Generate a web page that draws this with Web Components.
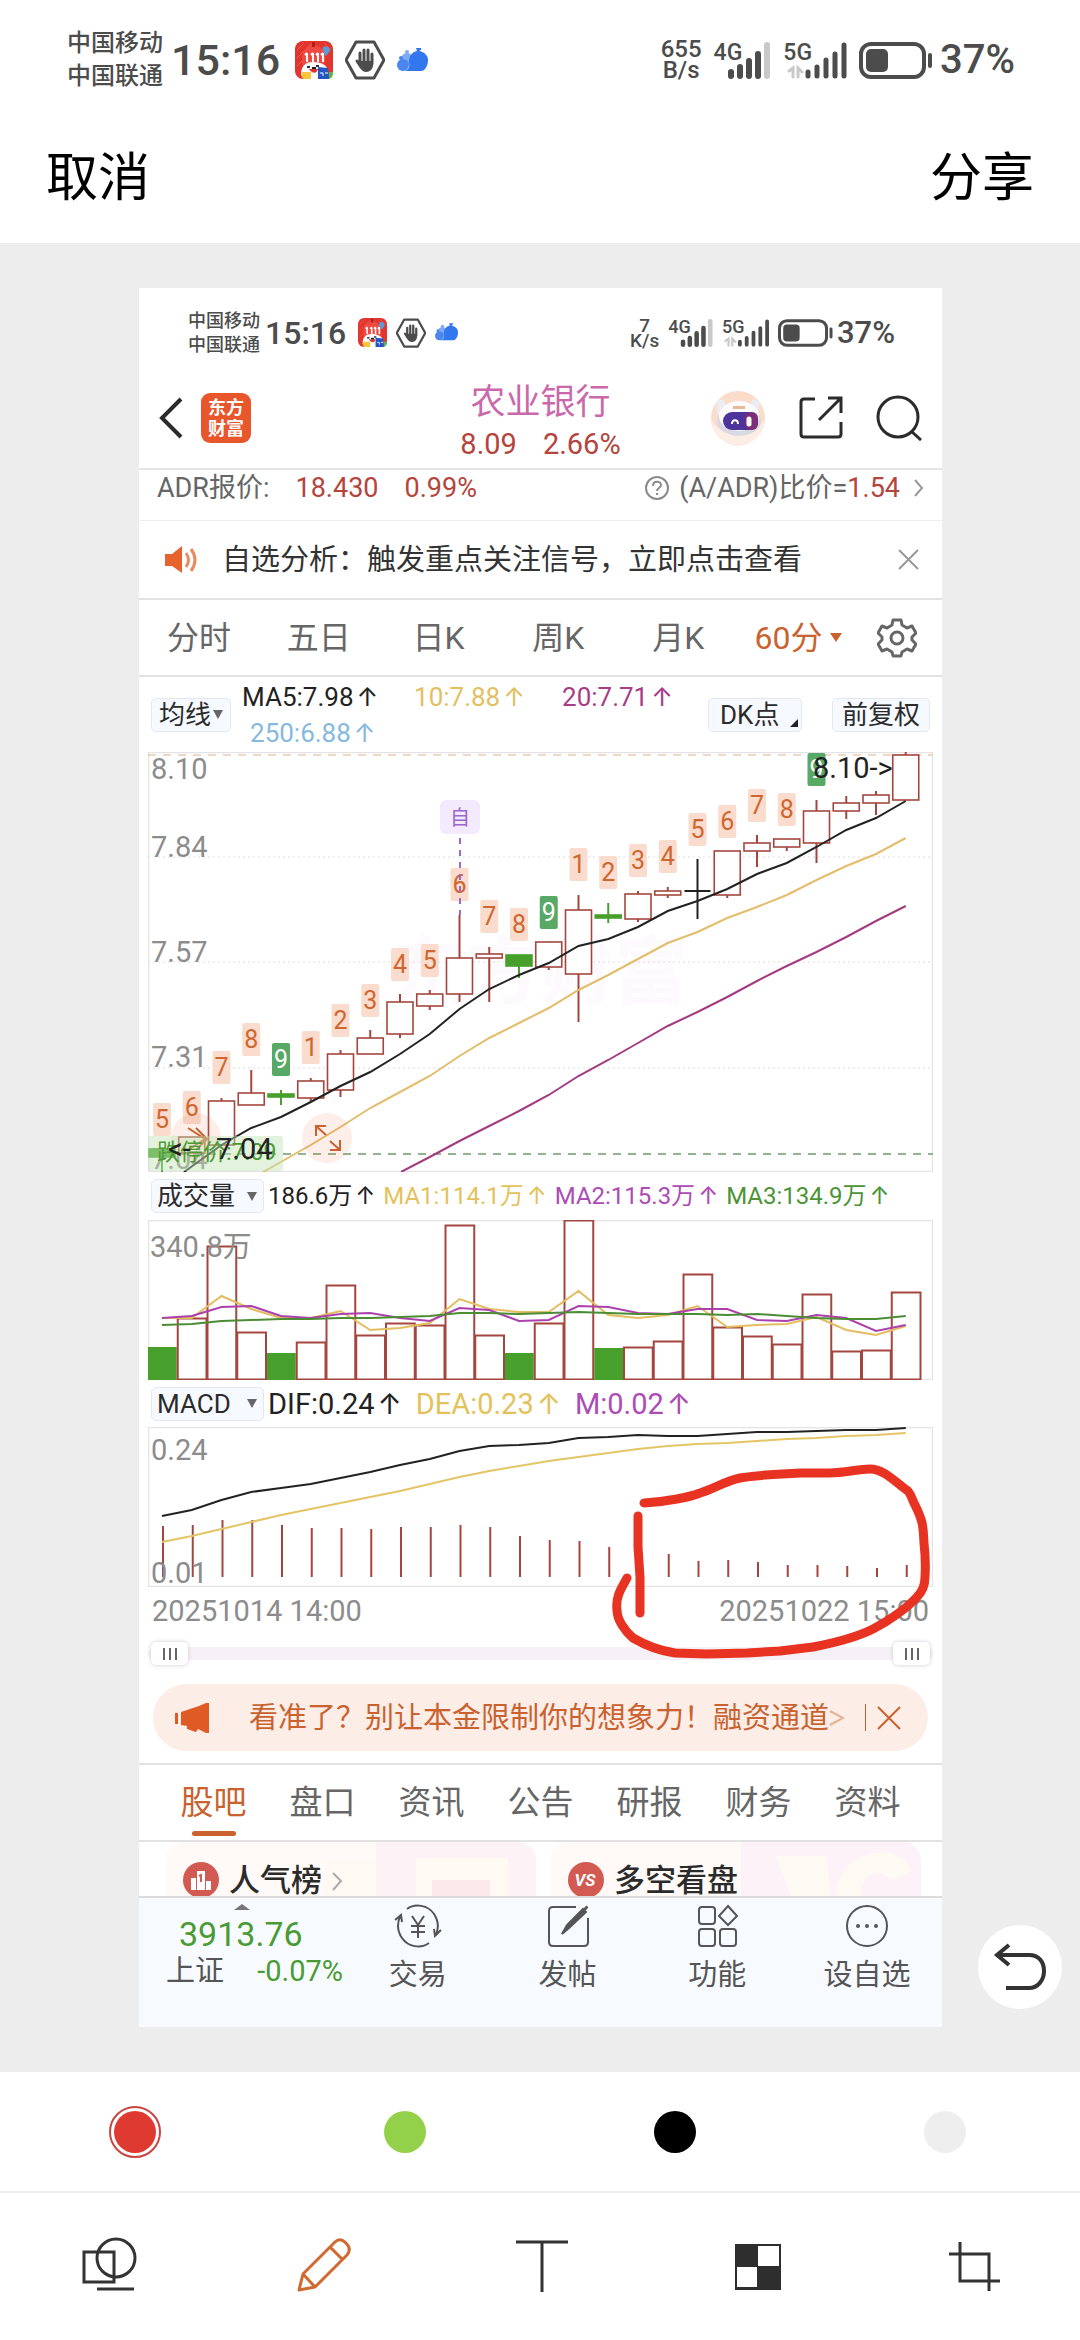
<!DOCTYPE html>
<html lang="zh-CN">
<head>
<meta charset="utf-8">
<meta name="viewport" content="width=device-width, initial-scale=1">
<title>编辑图片</title>
<style>
  body {
    margin: 0;
    background: #fff;
    color: #333;
    font-family: Roboto, "Noto Sans CJK SC", sans-serif;
  }
</style>
</head>
<body>
<photo-editor>
  <status-line slot="status" speed="655" unit="B/s"></status-line>
  <stock-page>
    <status-line slot="status" small speed="7" unit="K/s"></status-line>
  </stock-page>
</photo-editor>

<script>
(function () {
  const RESET = `
    :host, *, *::before, *::after { box-sizing: border-box; }
    button {
      margin: 0; padding: 0; border: 0;
      background: none; color: inherit; font: inherit; cursor: pointer;
    }
    a { color: inherit; text-decoration: none; }
    svg { display: block; flex: none; }
  `;

  // Registers an element whose shadow root is a clone of the given markup.
  function define(name, html, setup) {
    const template = document.createElement("template");
    template.innerHTML = html;

    customElements.define(name, class extends HTMLElement {
      constructor() {
        super();
        this.attachShadow({ mode: "open" });
        this.shadowRoot.appendChild(template.content.cloneNode(true));
      }

      connectedCallback() {
        if (setup) setup(this, this.shadowRoot);
      }
    });
  }

  // ---------- phone status line ----------

  define("status-line", `
    <style>
      ${RESET}
      :host {
        display: flex; justify-content: space-between; align-items: center;
        height: 120px; padding: 0 65px 0 67px; color: #4c4c4c;
        --carrier: 24px; --row: 33px; --clock: 43px; --net: 24px; --net-row: 21px; --pct: 40px;
        --icon: 38px; --hex: 40px; --cloud: 31px; --gen: 23px; --bars: 37px; --bat: 75px;
        --gap: 12px; --lap: -15px;
      }
      :host([small]) {
        height: 89px; padding: 0 47px 0 49px;
        --carrier: 18px; --row: 24px; --clock: 32px; --net: 19px; --net-row: 15px; --pct: 31px;
        --icon: 29px; --hex: 30px; --cloud: 23px; --gen: 18px; --bars: 28px; --bat: 56px;
        --gap: 9px; --lap: -11px;
      }
      .side { display: flex; align-items: center; gap: var(--gap); }
      .carriers { font-size: var(--carrier); line-height: var(--row); font-weight: 500; }
      .carriers div, .net div { white-space: nowrap; }
      .clock { font-size: var(--clock); line-height: 1; font-weight: 500; margin: 0 3px 0 -4px; }
      .net { font-size: var(--net); line-height: var(--net-row); font-weight: 500; text-align: center; }
      .signal { display: flex; align-items: flex-start; height: var(--bars); }
      .signal span { font-size: var(--gen); line-height: 1; font-weight: 500; margin-right: var(--lap); margin-top: -1px; }
      .signal svg { height: var(--bars); width: auto; }
      .battery { height: var(--bars); width: var(--bat); }
      .pct { font-size: var(--pct); line-height: 1; font-weight: 500; margin-left: -6px; }
    </style>
    <div class="side">
      <div class="carriers"><div>中国移动</div><div>中国联通</div></div>
      <div class="clock">15:16</div>
      <svg style="width:var(--icon);height:var(--icon)" viewBox="0 0 38 38">
        <rect width="38" height="38" rx="8" fill="#e2352d"/>
        <path d="M2 9 9 2M2 17 17 2M2 25 9 18M29 2l7 7" stroke="#ee5a4c" stroke-width="1"/>
        <path d="M28 6c4-2 7 1 7 4l-4 5-4-3z" fill="#5a9bd8"/>
        <path d="M7 24C6 10 11 4 18 4s14 6 12 20z" fill="#ef4a41"/>
        <path d="M17 1h3v5h-3z" fill="#a8231d"/>
        <path d="M12 12v9M18 12v9M23 12v9M28 12v9M10 14l2-2M16 14l2-2M21 14l2-2M26 14l2-2" stroke="#fff" stroke-width="2" fill="none"/>
        <path d="M6 34c0-9 4-13 12-13s14 3 15 9v8H10z" fill="#fff"/>
        <path d="M12 25h3v2h-3zM21 24h3v2h-3z" fill="#333"/>
        <path d="M14 28h9c-1 5-6 5-9 0z" fill="#d93a30"/>
        <path d="M17 26h4v2h-4z" fill="#222"/>
        <path d="M7 31h9v7H9c-2 0-3-3-2-7z" fill="#f9c53a"/>
        <path d="M23 26l10 1 1 11H23z" fill="#2456c4"/>
        <path d="M25 32h3v3m2-3h3" stroke="#fff" fill="none"/>
        <path d="M34 31h4c0 4-1 6-4 7z" fill="#59b35b"/>
      </svg>
      <svg style="width:var(--hex);height:var(--hex)" viewBox="0 0 40 40" fill="none" stroke="#4c4c4c">
        <path d="M11 2h18l10 18-10 18H11L1 20z" stroke-width="3" stroke-linejoin="round"/>
        <path d="M15 13v10M19 10v12M23 10v12M27 14v10M12 21l4 6" stroke-width="3" stroke-linecap="round"/>
        <path d="M14 21h14v4c0 4-3 7-7 7s-6-4-8-8z" fill="#4c4c4c" stroke="none"/>
      </svg>
      <svg style="width:var(--cloud);height:var(--cloud)" viewBox="0 0 31 31">
        <circle cx="10" cy="14" r="6" fill="#7eaaf3"/><circle cx="10" cy="7" r="2" fill="#7eaaf3"/>
        <circle cx="6" cy="20" r="6" fill="#4a86ee"/><circle cx="4" cy="13" r="2" fill="#4a86ee"/>
        <path d="M19 3h5v2l-2 1c6 1 9 5 9 9 0 6-3 11-7 11H6c6 0 7-5 6-9 0-6 3-10 8-11z" fill="#3377f0"/>
      </svg>
    </div>
    <div class="side">
      <div class="net"><div id="speed"></div><div id="unit"></div></div>
      <div class="signal">
        <span>4G</span>
        <svg viewBox="0 0 44 37" stroke="#4c4c4c" stroke-width="6" stroke-linecap="round">
          <path d="M4 30v4M13 25v9M22 19v15M31 12v22"/><path d="M40 3v31" stroke="#c9c9c9"/>
        </svg>
      </div>
      <div class="signal">
        <span>5G</span>
        <svg viewBox="-10 0 60 37" stroke="#4c4c4c" stroke-width="5" stroke-linecap="round" style="margin-left:-10px">
          <path d="M11 30v4M20 25v9M29 18v16M38 12v22M47 3v31"/>
          <path d="M-8 29l4-3v9M1 35v-9l4 4" stroke="#c9c9c9" stroke-width="3" fill="none"/>
        </svg>
      </div>
      <svg class="battery" viewBox="0 0 75 37">
        <rect x="2" y="2" width="63" height="33" rx="10" fill="none" stroke="#4c4c4c" stroke-width="4"/>
        <rect x="7" y="7" width="22" height="23" rx="5" fill="#4c4c4c"/>
        <path d="M71 13v11" stroke="#4c4c4c" stroke-width="4" stroke-linecap="round"/>
      </svg>
      <div class="pct">37%</div>
    </div>
  `, (host, root) => {
    root.getElementById("speed").textContent = host.getAttribute("speed");
    root.getElementById("unit").textContent = host.getAttribute("unit");
  });

  // ---------- stock app: header ----------

  define("stock-header", `
    <style>
      ${RESET}
      :host { display: block; color: #666; }
      .nav {
        display: grid; grid-template-columns: 1fr auto 1fr; align-items: center;
        height: 93px; padding: 0 20px; border-bottom: 2px solid #e6e6e6;
      }
      .left, .right { display: flex; align-items: center; }
      .left { gap: 18px; margin-top: -10px; }
      .right { gap: 33px; justify-content: flex-end; margin-top: -10px; }
      .logo {
        width: 50px; height: 50px; border-radius: 9px; background: #e8562b; color: #fff;
        font-size: 18px; line-height: 21px; padding-top: 4px; font-weight: 700; text-align: center;
      }
      .name { text-align: center; }
      h1 { margin: 0; font-size: 35px; line-height: 42px; font-weight: 400; color: #cb68ab; }
      .quote { display: flex; gap: 26px; font-size: 29px; line-height: 40px; color: #b5443c; }
      .adr {
        display: flex; align-items: center; height: 51px; padding: 0 18px 14px;
        border-bottom: 1px solid #eee; font-size: 27px; line-height: 36px; white-space: nowrap;
      }
      .adr b { font-weight: 400; color: #b5443c; margin-left: 26px; }
      .adr a { display: flex; align-items: center; margin-left: auto; }
      .adr a b { margin: 0; }
      .adr a svg:first-child { margin-right: 9px; }
      .adr a svg:last-child { margin-left: 14px; }
    </style>
    <div class="nav">
      <div class="left">
        <button aria-label="返回"><svg width="24" height="42" viewBox="0 0 24 42" fill="none" stroke="#2b2b2b" stroke-width="4"><path d="M22 2 3 21l19 19"/></svg></button>
        <div class="logo">东方<br>财富</div>
      </div>
      <div class="name">
        <h1>农业银行</h1>
        <div class="quote"><span>8.09</span><span>2.66%</span></div>
      </div>
      <div class="right">
        <button aria-label="智能助手">
          <svg width="55" height="56" viewBox="0 0 55 56">
            <circle cx="27" cy="28" r="27" fill="#fbdccb"/>
            <path d="M0 29c6 36 48 36 54 0-10 20-44 20-54 0z" fill="#fdeee5"/>
            <path d="M5 13q2-5 8-3l3 12-9 4zM49 13q-2-5-8-3l-3 12 9 4z" fill="#ececf2"/>
            <ellipse cx="28" cy="31" rx="22" ry="15" fill="#d9d9e4"/>
            <ellipse cx="28" cy="26" rx="20" ry="15" fill="#fbfbfd"/>
            <path d="M22 16h12v3H22z" fill="#e9b996"/>
            <rect x="12" y="22" width="35" height="18" rx="9" fill="#4d349c"/>
            <rect x="34" y="22" width="13" height="18" rx="6" fill="#7c2f78"/>
            <path d="M21 34c0-5 6-5 6 0" fill="none" stroke="#fff" stroke-width="2"/>
            <path d="M38 29v5" stroke="#fff" stroke-width="5" stroke-linecap="round"/>
          </svg>
        </button>
        <button aria-label="分享"><svg width="44" height="44" viewBox="0 0 44 44" fill="none" stroke="#2b2b2b" stroke-width="3"><path d="M16 3H5Q2 3 2 6v32q0 3 3 3h34q3 0 3-3V26M20 24 42 2M29 2h13v15"/></svg></button>
        <button aria-label="搜索"><svg width="46" height="46" viewBox="0 0 46 46" fill="none" stroke="#2b2b2b" stroke-width="3"><circle cx="22" cy="22" r="20"/><path d="m35 36 10 9"/></svg></button>
      </div>
    </div>
    <div class="adr">
      <span>ADR报价:</span><b>18.430</b><b>0.99%</b>
      <a href="#adr">
        <svg width="26" height="26" viewBox="0 0 26 26" fill="none" stroke="#8a8a8a" stroke-width="2"><circle cx="13" cy="13" r="11"/><path d="M9 11c0-6 8-5 8-1 0 3-4 3-4 6"/><path d="M13 18v2"/></svg>
        (A/ADR)比价=<b>1.54</b>
        <svg width="10" height="18" viewBox="0 0 10 18" fill="none" stroke="#999" stroke-width="2"><path d="m1 1 7 8-7 8"/></svg>
      </a>
    </div>
  `);

  define("notice-bar", `
    <style>
      ${RESET}
      :host {
        display: flex; align-items: center; height: 79px; padding: 0 23px 0 26px;
        border-bottom: 2px solid #e2e2e2; font-size: 29px; line-height: 40px; white-space: nowrap;
      }
      p { margin: 0 auto 0 24px; }
    </style>
    <svg width="33" height="28" viewBox="0 0 33 28" fill="#e8622e">
      <path d="M0 8h7L17 0v27L7 20H0z"/>
      <path d="M21 7q5 7 0 14M26 3q8 11 0 22" fill="none" stroke="#e98a5f" stroke-width="3"/>
    </svg>
    <p><slot></slot></p>
    <button aria-label="关闭"><svg width="21" height="21" viewBox="0 0 21 21" stroke="#999" stroke-width="2"><path d="m1 1 19 19M20 1 1 20"/></svg></button>
  `);

  define("period-tabs", `
    <style>
      ${RESET}
      :host {
        display: grid; grid-template-columns: repeat(6, 1fr) 78px; align-items: center;
        height: 77px; padding-right: 6px; border-bottom: 2px solid #e2e2e2;
        font-size: 32px; line-height: 44px; color: #666;
      }
      button { display: flex; justify-content: center; align-items: center; gap: 7px; }
      .on { color: #c9622f; }
      .on::after { content: ""; border: 6px solid transparent; border-top: 9px solid #c9622f; border-bottom: 0; }
    </style>
    <button>分时</button><button>五日</button><button>日K</button><button>周K</button><button>月K</button>
    <button class="on">60分</button>
    <button aria-label="设置">
      <svg width="40" height="40" viewBox="0 0 40 40" fill="none" stroke="#666" stroke-width="3" stroke-linejoin="round">
        <path d="M16 2h8l1 5 5 3 5-2 4 7-4 4v3l4 4-4 7-5-2-5 3-1 4h-8l-1-4-5-3-5 2-4-7 4-4v-3l-4-4 4-7 5 2 5-3z"/>
        <circle cx="20" cy="20" r="6"/>
      </svg>
    </button>
  `);

  // ---------- indicator rows ----------

  const CHIP = `
    .chip {
      display: flex; align-items: center; height: 34px; padding: 0 7px;
      border: 1px solid #e3e7f0; border-radius: 5px; background: #f6f9ff;
      color: #2b2b2b; font-size: 26px; line-height: 32px; white-space: nowrap; flex: none;
    }
    .chip.drop::after { content: ""; border: 5px solid transparent; border-top: 9px solid #666; border-bottom: 0; }
    .up::after { content: "↑"; margin-left: 3px; font-family: Inter, "DejaVu Sans", sans-serif; }
  `;

  define("average-row", `
    <style>
      ${RESET}
      ${CHIP}
      :host { display: flex; align-items: center; height: 75px; padding: 0 12px; }
      .chip.drop { gap: 2px; }
      .values {
        display: grid; grid-template-columns: 148px 148px auto;
        font-size: 26px; line-height: 35px; margin-left: 11px; white-space: nowrap;
      }
      .values span:nth-child(2), .values span:nth-child(3) { padding-left: 24px; }
      .values span:nth-child(4) { padding-left: 8px; }
      .dk { width: 94px; margin-left: auto; padding: 0 3px 0 11px; justify-content: space-between; }
      .dk::after { content: ""; align-self: flex-end; margin-bottom: 4px; border: 4px solid transparent; border-right-color: #222; border-bottom-color: #222; }
      .fq { width: 98px; margin-left: 30px; justify-content: center; }
    </style>
    <button class="chip drop">均线</button>
    <div class="values">
      <span class="up" style="color:#222">MA5:7.98</span>
      <span class="up" style="color:#e2bf62">10:7.88</span>
      <span class="up" style="color:#a93c86">20:7.71</span>
      <span class="up" style="color:#85b9dd">250:6.88</span>
    </div>
    <button class="chip dk">DK点</button>
    <button class="chip fq">前复权</button>
  `);

  define("indicator-row", `
    <style>
      ${RESET}
      ${CHIP}
      :host { display: flex; align-items: center; height: 48px; padding: 0 12px; }
      .chip { width: 113px; padding: 0 6px 0 5px; justify-content: space-between; }
      .values { display: flex; gap: 8px; margin-left: 4px; font-size: 24px; line-height: 34px; white-space: nowrap; }
      :host([large]) { height: 47px; }
      :host([large]) .values { font-size: 29px; gap: 14px; }
    </style>
    <button class="chip drop"></button>
    <div class="values"></div>
  `, (host, root) => {
    root.querySelector(".chip").textContent = host.getAttribute("name");
    root.querySelector(".values").innerHTML = host.getAttribute("values").split(" ").map((pair) => {
      const [text, color] = pair.split("#");
      return `<span class="up" style="color:#${color}">${text}</span>`;
    }).join("");
  });

  // ---------- charts ----------

  const RED = "#a4463f";
  const GREEN = "#47a02c";
  const BLACK = "#222";
  const STEP = 29.75;
  const cx = (i) => 14 + i * STEP;

  // [body top, body bottom, high, low, badge top, badge text, colour]
  const candles = [
    [397, 405, 397, 420, 351, "5", GREEN], [385, 401, 385, 401, 339, "6"],
    [349, 393, 346, 393, 299, "7"], [341, 353, 318, 353, 271, "8"],
    [342, 345, 338, 353, 291, "9", GREEN], [329, 346, 326, 350, 279, "1"],
    [302, 338, 298, 345, 252, "2"], [286, 302, 278, 302, 232, "3"],
    [250, 282, 242, 286, 196, "4"], [242, 254, 238, 258, 192, "5"],
    [206, 242, 163, 250, 116, "6"], [202, 206, 195, 250, 148, "7"],
    [203, 214, 203, 226, 156, "8", GREEN], [190, 215, 190, 218, 144, "9"],
    [158, 222, 143, 270, 96, "1"], [163, 166, 151, 171, 104, "2", GREEN],
    [142, 167, 139, 170, 92, "3"], [139, 143, 135, 146, 88, "4"],
    [139, 139, 107, 167, 61, "5", BLACK], [99, 143, 99, 146, 53, "6"],
    [91, 99, 83, 115, 37, "7"], [87, 95, 87, 99, 41, "8"],
    [59, 91, 48, 111, 1, "9"], [51, 59, 44, 67], [43, 51, 39, 63], [3, 48, 0, 48]
  ];

  const volumes = [127, 98, 26, 112, 133, 122, 65, 115, 103, 105, 5, 115, 133, 103, 0, 128, 127, 121, 54, 107, 116, 124, 74, 131, 130, 72];
  const macd = [348, 344, 330, 330, 344, 354, 354, 357, 350, 352, 345, 352, 377, 390, 393, 411, 425, 433, 453, 450, 456, 464, 465, 468, 475, 464];

  function line(values, color, first = 0, start = "") {
    const points = values.map((y, k) => cx(first + k) + "," + y).join(" ");
    return `<polyline points="${start} ${points}" fill="none" stroke="${color}" stroke-width="2"/>`;
  }

  function third(values, offset) {
    return values.map((v) => Math.round(v / 3 - offset));
  }

  function drawCandle([top, bottom, high, low, , , color = RED], i) {
    const x = cx(i);
    if (color === BLACK) {
      return `<path d="M${x - 13} ${top}h26M${x} ${high}V${low}" stroke="${BLACK}" stroke-width="2"/>`;
    }
    const wick = `<path d="M${x} ${high}V${top}M${x} ${bottom}V${low}" stroke="${color}" stroke-width="2"/>`;
    const body = `<rect x="${x - 13}" y="${top}" width="26" height="${Math.max(bottom - top, 3)}" fill="${color === GREEN ? GREEN : "#fff"}" stroke="${color}" stroke-width="1.6"/>`;
    return wick + body;
  }

  function drawBadge([, , , , y, text], i) {
    if (!text) return "";
    const nine = text === "9";
    return `<rect x="${cx(i) - 9}" y="${y}" width="18" height="33" rx="2" fill="${nine ? "#58a866" : "#f9dccd"}"/>
      <text x="${cx(i)}" y="${y + 25}" font-size="25" text-anchor="middle" fill="${nine ? "#fff" : "#d0662f"}">${text}</text>`;
  }

  const CHART_STYLE = `
    <style>
      :host { display: block; margin: 0 9px; }
      svg { display: block; width: 100%; height: auto; }
      text { font-family: Roboto, "Noto Sans CJK SC", sans-serif; }
      .axis { font-size: 29px; fill: #8c8c8c; }
    </style>
  `;

  define("price-chart", CHART_STYLE, (host, root) => {
    root.innerHTML = CHART_STYLE + `
      <svg viewBox="0 0 785 420" role="img" aria-label="60分K线">
        <rect x="0.5" y="0.5" width="784" height="419" fill="none" stroke="#e4e4e4" stroke-width="1.5"/>
        <text x="244" y="246" font-size="74" font-weight="700" fill="#fdfafd">东方财富</text>
        <path d="M0 105h785M0 210h785M0 316h785" stroke="#ddd" stroke-dasharray="2 3"/>
        <path d="M0 3h785" stroke="#d9b48c" stroke-dasharray="8 7"/>
        <path d="M0 402h785" stroke="#6d9f68" stroke-dasharray="8 7" stroke-width="1.5"/>
        <g class="axis"><text x="3" y="27">8.10</text><text x="3" y="105">7.84</text><text x="3" y="210">7.57</text><text x="3" y="315">7.31</text><text x="3" y="417">7.04</text></g>
        ${candles.map(drawCandle).join("")}
        ${candles.map(drawBadge).join("")}
        ${line([393, 376, 365, 350, 334, 320, 302, 282, 257, 237, 223, 211, 194, 187, 175, 159, 149, 137, 122, 111, 95, 78, 66, 49], BLACK, 2, "36,420")}
        ${line([393, 375, 356, 340, 324, 304, 286, 271, 256, 238, 223, 207, 191, 180, 166, 155, 143, 128, 114, 102, 86], "#e3bd6b", 5, "115,420")}
        ${line([405, 389, 374, 359, 343, 324, 308, 291, 274, 260, 245, 229, 214, 200, 185, 169, 154], "#a43a80", 9, "253,420")}
        <rect x="292" y="48" width="40" height="34" rx="6" fill="#f4eafd"/>
        <text x="312" y="73" font-size="20" text-anchor="middle" fill="#9a67cc">自</text>
        <path d="M312 86v77" stroke="#9a67cc" stroke-width="2" stroke-dasharray="6 6"/>
        <circle cx="48" cy="386" r="25" fill="#e8562b" fill-opacity=".1"/>
        <path d="m40 376 17 11-17 11m8-22 11 11-11 11" fill="none" stroke="#c9622f" stroke-width="2"/>
        <rect x="0" y="384" width="135" height="35" rx="3" fill="#bfe3b4" fill-opacity=".45"/>
        <text x="9" y="408" font-size="23" fill="#4a9b33">跌停价:7.09</text>
        <text x="20" y="407" font-size="29" fill="#222">&lt;-</text><text x="68" y="407" font-size="29" fill="#222">7.04</text>
        <circle cx="179" cy="386" r="25" fill="#e8562b" fill-opacity=".1"/>
        <path d="M168 384v-10h10m-10 0 10 9M192 388v10h-10m10 0-10-9" fill="none" stroke="#c9622f" stroke-width="2"/>
        <text x="665" y="26" font-size="29" fill="#222">8.10-&gt;</text>
      </svg>`;
  });

  define("volume-chart", CHART_STYLE, (host, root) => {
    const bars = volumes.map((y, i) => {
      const x = i * STEP;
      return candles[i][6] === GREEN
        ? `<rect x="${x}" y="${y}" width="${STEP - 1}" height="${160 - y}" fill="${GREEN}"/>`
        : `<rect x="${x}" y="${y + 0.5}" width="${STEP - 1}" height="${159 - y}" fill="none" stroke="${RED}" stroke-width="2"/>`;
    }).join("");
    root.innerHTML = CHART_STYLE + `
      <svg viewBox="0 0 785 160" role="img" aria-label="成交量">
        <rect x="0.5" y="0.5" width="784" height="159" fill="none" stroke="#e4e4e4" stroke-width="1.5"/>
        ${bars}
        ${line(third([445, 443, 379, 418, 444, 444, 424, 479, 473, 459, 386, 417, 427, 427, 363, 436, 444, 436, 408, 471, 465, 463, 440, 481, 494, 468], 50), "#e3bd5e")}
        ${line(third([444, 439, 410, 408, 439, 443, 432, 428, 443, 453, 415, 420, 453, 450, 409, 411, 429, 431, 416, 417, 451, 454, 435, 444, 483, 466], 50), "#ac41ad")}
        ${line(third([465, 463, 453, 449, 448, 447, 445, 443, 442, 438, 430, 430, 431, 430, 426, 428, 432, 431, 432, 435, 433, 437, 443, 446, 447, 439], 50), "#4b8c35")}
        <text class="axis" x="2" y="37">340.8万</text>
      </svg>`;
  });

  define("macd-chart", CHART_STYLE, (host, root) => {
    root.innerHTML = CHART_STYLE + `
      <svg viewBox="0 0 785 160" role="img" aria-label="MACD">
        <rect x="0.5" y="0.5" width="784" height="159" fill="none" stroke="#e4e4e4" stroke-width="1.5"/>
        ${third(macd, 17).map((y, i) => `<path d="M${cx(i) + 1} ${y}V150" stroke="${RED}" stroke-width="2"/>`).join("")}
        ${line(third([318, 299, 270, 247, 234, 223, 205, 187, 166, 147, 124, 109, 104, 98, 85, 82, 76, 77, 78, 72, 67, 67, 63, 61, 61, 53], 17), BLACK)}
        ${line(third([397, 378, 357, 335, 315, 297, 280, 262, 243, 221, 202, 182, 167, 153, 140, 129, 118, 109, 103, 98, 93, 88, 84, 79, 74, 69], 17), "#e3c566")}
        <text class="axis" x="3" y="33">0.24</text><text class="axis" x="3" y="156">0.01</text>
      </svg>`;
  });

  define("time-range", `
    <style>
      ${RESET}
      :host { display: block; margin: 0 9px; color: #8c8c8c; }
      .dates { display: flex; justify-content: space-between; padding: 0 4px; font-size: 29px; line-height: 49px; }
      .track { display: grid; align-items: center; height: 34px; }
      .track::before { content: ""; grid-area: 1 / 1; height: 13px; border-radius: 7px; background: #f6f1f6; }
      input {
        grid-area: 1 / 1; -webkit-appearance: none; appearance: none;
        width: auto; margin: 0 3px; background: none; pointer-events: none;
      }
      input::-webkit-slider-thumb {
        -webkit-appearance: none; pointer-events: auto; width: 37px; height: 23px;
        border-radius: 5px; box-shadow: 0 0 4px #cfc8d4;
        background:
          linear-gradient(#666, #666) 12px 6px / 2px 12px no-repeat,
          linear-gradient(#666, #666) 18px 6px / 2px 12px no-repeat,
          linear-gradient(#666, #666) 24px 6px / 2px 12px no-repeat, #fff;
      }
    </style>
    <div class="dates"><span>20251014 14:00</span><span>20251022 15:00</span></div>
    <div class="track">
      <input type="range" aria-label="开始时间" value="0">
      <input type="range" aria-label="结束时间" value="100">
    </div>
  `);

  // ---------- stock app: lower part ----------

  define("promo-banner", `
    <style>
      ${RESET}
      :host {
        display: flex; align-items: center; height: 67px; margin: 14px 14px 12px; padding: 0 27px 0 22px;
        border-radius: 34px; background: #fcede6; color: #c9622f;
        font-size: 29px; line-height: 40px; white-space: nowrap;
      }
      a { margin-left: 40px; margin-right: auto; display: flex; align-items: center; }
      i { width: 1px; height: 27px; margin: 0 11px 0 8px; background: #c9622f; }
    </style>
    <svg width="34" height="30" viewBox="0 0 34 30" fill="#e05a26"><path d="M0 10h3v11H0zM6 9l18-6 7-3h3v30h-3l-8-4-2 3-9-3v-3l-6-1z"/></svg>
    <a href="#promo">看准了？别让本金限制你的想象力！融资通道<svg width="16" height="16" viewBox="0 0 16 16" fill="none" stroke="#e5b294" stroke-width="2"><path d="m1 1 13 7-13 7"/></svg></a>
    <i></i>
    <button aria-label="关闭"><svg width="24" height="24" viewBox="0 0 24 24" stroke="#c9622f" stroke-width="2"><path d="m1 1 22 22M23 1 1 23"/></svg></button>
  `);

  define("info-tabs", `
    <style>
      ${RESET}
      :host {
        display: grid; grid-template-columns: repeat(7, 1fr); height: 79px; padding: 0 20px;
        border-top: 2px solid #e2e2e2; border-bottom: 2px solid #e2e2e2;
        font-size: 33px; color: #666;
      }
      a { display: flex; flex-direction: column; align-items: center; line-height: 66px; padding-top: 5px; }
      .on { color: #c9622f; }
      .on::after { content: ""; width: 44px; height: 5px; margin-top: -5px; border-radius: 3px; background: #c9622f; }
    </style>
    <a class="on" href="#guba">股吧</a><a href="#pankou">盘口</a><a href="#zixun">资讯</a><a href="#gonggao">公告</a><a href="#yanbao">研报</a><a href="#caiwu">财务</a><a href="#ziliao">资料</a>
  `);

  define("board-cards", `
    <style>
      ${RESET}
      :host { display: grid; grid-template-columns: 1fr 1fr; gap: 15px; height: 54px; padding: 0 21px 0 27px; overflow: hidden; }
      a {
        position: relative; display: flex; align-items: flex-start; height: 100px; padding: 16px 17px; gap: 10px;
        border-radius: 18px; background: #fffaf7;
        color: #2b2b2b; font-size: 31px; line-height: 46px; font-weight: 500; overflow: hidden;
      }
      .icon, .more, span { position: relative; }
      .icon { margin-top: 4px; }
      .icon text { font: italic 700 17px Roboto, sans-serif; }
      .more { margin-top: 14px; }
      .mark { position: absolute; right: 0; top: 0; }
    </style>
    <a href="#rank">
      <svg class="mark" width="220" height="54" viewBox="0 0 220 54"><path d="M60 0h160v54H60z" fill="#fdf2f6"/><path d="M10 20h50v34H10zM100 16h92v38h-92z" fill="#fff9f4"/><path d="M116 38h58v16h-58z" fill="#fce9ea"/></svg>
      <svg class="icon" width="36" height="36" viewBox="0 0 36 36"><circle cx="18" cy="18" r="18" fill="#d25a52"/><path d="M8 16h5v12H8zM14 9h8v19h-8zM23 19h5v9h-5z" fill="#fff"/><path d="m16 14 2-1v7" fill="none" stroke="#d25a52" stroke-width="2"/></svg>
      <span>人气榜</span>
      <svg class="more" width="11" height="19" viewBox="0 0 11 19" fill="none" stroke="#aaa" stroke-width="2"><path d="m1 1 8 8-8 9"/></svg>
    </a>
    <a href="#watch">
      <svg class="mark" width="180" height="54" viewBox="0 0 180 54"><path d="M0 0h180v54H0z" fill="#fdf2f7"/><path d="M35 14h50l5 40H50zM95 54c0-50 70-55 75-25l-20 10c-10-15-30-10-30 15z" fill="#fff9f4"/></svg>
      <svg class="icon" width="36" height="36" viewBox="0 0 36 36"><circle cx="18" cy="18" r="18" fill="#d25a52"/><text x="17" y="24" text-anchor="middle" fill="#fff">VS</text></svg>
      <span>多空看盘</span>
    </a>
  `);

  define("trade-bar", `
    <style>
      ${RESET}
      :host {
        display: grid; grid-template-columns: 204px repeat(4, 1fr); height: 131px;
        border-top: 2px solid #dcdcdc; background: #f7faff; color: #555; font-size: 29px; line-height: 40px;
      }
      button { display: flex; flex-direction: column; align-items: center; padding-top: 6px; gap: 7px; }
      .index { gap: 0; padding: 0; align-items: stretch; position: relative; }
      .index::before { content: ""; position: absolute; left: 95px; top: 6px; border: 8px solid transparent; border-bottom: 6px solid #777; border-top: 0; }
      .index b { font-weight: 400; color: #4a9b33; font-size: 34px; line-height: 38px; padding-left: 40px; margin-top: 17px; text-align: left; }
      .index div { display: flex; justify-content: space-between; padding-left: 27px; line-height: 36px; }
      .index div span + span { color: #4a9b33; }
    </style>
    <button class="index"><b>3913.76</b><div><span>上证</span><span>-0.07%</span></div></button>
    <button>
      <svg width="48" height="44" viewBox="0 0 48 44" fill="none" stroke="#555" stroke-width="2"><path d="M13 5C21-1 34 1 40 10s4 16 2 21m5-5-6 6-1-7M35 39C27 45 14 43 8 34S4 18 6 12M1 16l6-5 1 7"/><path d="m18 12 6 9 6-9M24 21v13M17 22h14M17 28h14"/></svg>
      交易
    </button>
    <button>
      <svg width="44" height="44" viewBox="0 0 44 44" fill="none" stroke="#555" stroke-width="2"><path d="M30 3H7Q3 3 3 7v31q0 4 4 4h31q4 0 4-4V14"/><path d="m16 30 5-9L37 5l3 3-17 16z" fill="#555"/><path d="m39 3 2 2" stroke-width="4"/></svg>
      发帖
    </button>
    <button>
      <svg width="44" height="44" viewBox="0 0 44 44" fill="none" stroke="#555" stroke-width="2"><rect x="4" y="3" width="16" height="17" rx="3"/><rect x="4" y="25" width="16" height="17" rx="3"/><rect x="25" y="25" width="16" height="17" rx="3"/><path d="m33 2 9 10-9 9-9-9z"/></svg>
      功能
    </button>
    <button>
      <svg width="44" height="44" viewBox="0 0 44 44" fill="none" stroke="#555" stroke-width="2"><circle cx="22" cy="22" r="20"/><path d="M13 22h0M22 22h0M31 22h0" stroke-width="4" stroke-linecap="round"/></svg>
      设自选
    </button>
  `);

  define("stock-page", `
    <style>
      ${RESET}
      :host { display: block; position: relative; background: #fff; overflow: hidden; }
      .ink { position: absolute; inset: 0; width: 100%; height: 100%; pointer-events: none; }
    </style>
    <slot name="status"></slot>
    <stock-header></stock-header>
    <notice-bar>自选分析：触发重点关注信号，立即点击查看</notice-bar>
    <period-tabs></period-tabs>
    <average-row></average-row>
    <price-chart></price-chart>
    <indicator-row name="成交量" values="186.6万#222222 MA1:114.1万#e3c25c MA2:115.3万#ac4cb4 MA3:134.9万#4b9436"></indicator-row>
    <volume-chart></volume-chart>
    <indicator-row large name="MACD" values="DIF:0.24#222222 DEA:0.23#e3c25c M:0.02#ac4cb4"></indicator-row>
    <macd-chart></macd-chart>
    <time-range></time-range>
    <promo-banner></promo-banner>
    <info-tabs></info-tabs>
    <board-cards></board-cards>
    <trade-bar></trade-bar>
    <svg class="ink" viewBox="0 0 803 1739" fill="none" stroke="#e83323" stroke-width="9" stroke-linecap="round" stroke-linejoin="round">
      <path d="M505 1215Q522 1214 538 1211T561 1205C575 1201 586 1193 601 1190S640 1186 661 1185H691C705 1185 720 1181 731 1181C745 1181 756 1194 769 1203C773 1208 774 1214 776 1217C785 1235 784 1240 785 1255Q787 1273 786 1289C786 1300 781 1306 778 1309C768 1320 750 1333 734 1341S695 1355 674 1359L641 1363 608 1365 568 1366 536 1365C522 1363 506 1357 494 1350C486 1343 478 1332 478 1322C476 1308 484 1298 488 1290"/>
      <path d="M499 1228V1259L501 1289V1325"/>
    </svg>
  `);

  // ---------- photo editor shell ----------

  define("color-picker", `
    <style>
      ${RESET}
      :host { display: grid; grid-template-columns: repeat(4, 1fr); height: 121px; border-bottom: 2px solid #ededed; justify-items: center; align-items: center; }
      input {
        -webkit-appearance: none; appearance: none; width: 42px; height: 42px; margin: 0;
        border-radius: 50%; background: var(--c); outline-offset: 3px;
      }
      input:checked { outline: 2px solid #c7463f; }
    </style>
    <input type="radio" name="color" aria-label="红色" style="--c:#de3a31" checked>
    <input type="radio" name="color" aria-label="绿色" style="--c:#94d14a">
    <input type="radio" name="color" aria-label="黑色" style="--c:#000">
    <input type="radio" name="color" aria-label="灰色" style="--c:#eee">
  `);

  define("tool-bar", `
    <style>
      ${RESET}
      :host { display: grid; grid-template-columns: repeat(5, 1fr); padding: 43px 0 46px; }
      button { display: flex; justify-content: center; }
    </style>
    <button aria-label="形状"><svg width="58" height="58" viewBox="0 0 58 58" fill="none" stroke="#333" stroke-width="3"><path d="M5 16h30v30H5z"/><circle cx="37" cy="22" r="19"/><path d="M18 53h37"/></svg></button>
    <button aria-label="画笔"><svg width="58" height="58" viewBox="0 0 58 58" fill="none" stroke="#d0692f" stroke-width="3" stroke-linejoin="round"><path d="M4 54 8 38 40 6q5-5 11 1t1 12L20 51zM35 11l12 12M8 38l12 13"/></svg></button>
    <button aria-label="文字"><svg width="58" height="58" viewBox="0 0 58 58" fill="none" stroke="#333" stroke-width="3"><path d="M5 6h52M31 6v50"/></svg></button>
    <button aria-label="马赛克"><svg width="58" height="58" viewBox="0 0 58 58"><path d="M8 8h46v46H8z" fill="#2e2e2e"/><path d="M31 10h21v20H31zM10 31h20v20H10z" fill="#fff"/></svg></button>
    <button aria-label="裁剪"><svg width="58" height="58" viewBox="0 0 58 58" fill="none" stroke="#333" stroke-width="3"><path d="M17 6v39h40M6 18h40v37"/></svg></button>
  `);

  define("photo-editor", `
    <style>
      ${RESET}
      :host { display: block; }
      .actions { display: flex; justify-content: space-between; padding: 2px 46px 7px; color: #000; font-size: 52px; line-height: 114px; }
      main { position: relative; padding: 45px 138px 45px 139px; background: #ededed; }
      .undo {
        position: absolute; right: 18px; bottom: 63px; width: 84px; height: 84px;
        display: flex; align-items: center; justify-content: center;
        border-radius: 50%; background: #fff;
      }
    </style>
    <slot name="status"></slot>
    <div class="actions"><button>取消</button><button>分享</button></div>
    <main>
      <slot></slot>
      <button class="undo" aria-label="撤销"><svg width="54" height="48" viewBox="0 0 54 48" fill="none" stroke="#333" stroke-width="4"><path d="M16 2 4 12l12 10M4 12h32c10 0 15 7 15 16s-6 17-15 17H13"/></svg></button>
    </main>
    <color-picker></color-picker>
    <tool-bar></tool-bar>
  `);
})();
</script>
</body>
</html>
